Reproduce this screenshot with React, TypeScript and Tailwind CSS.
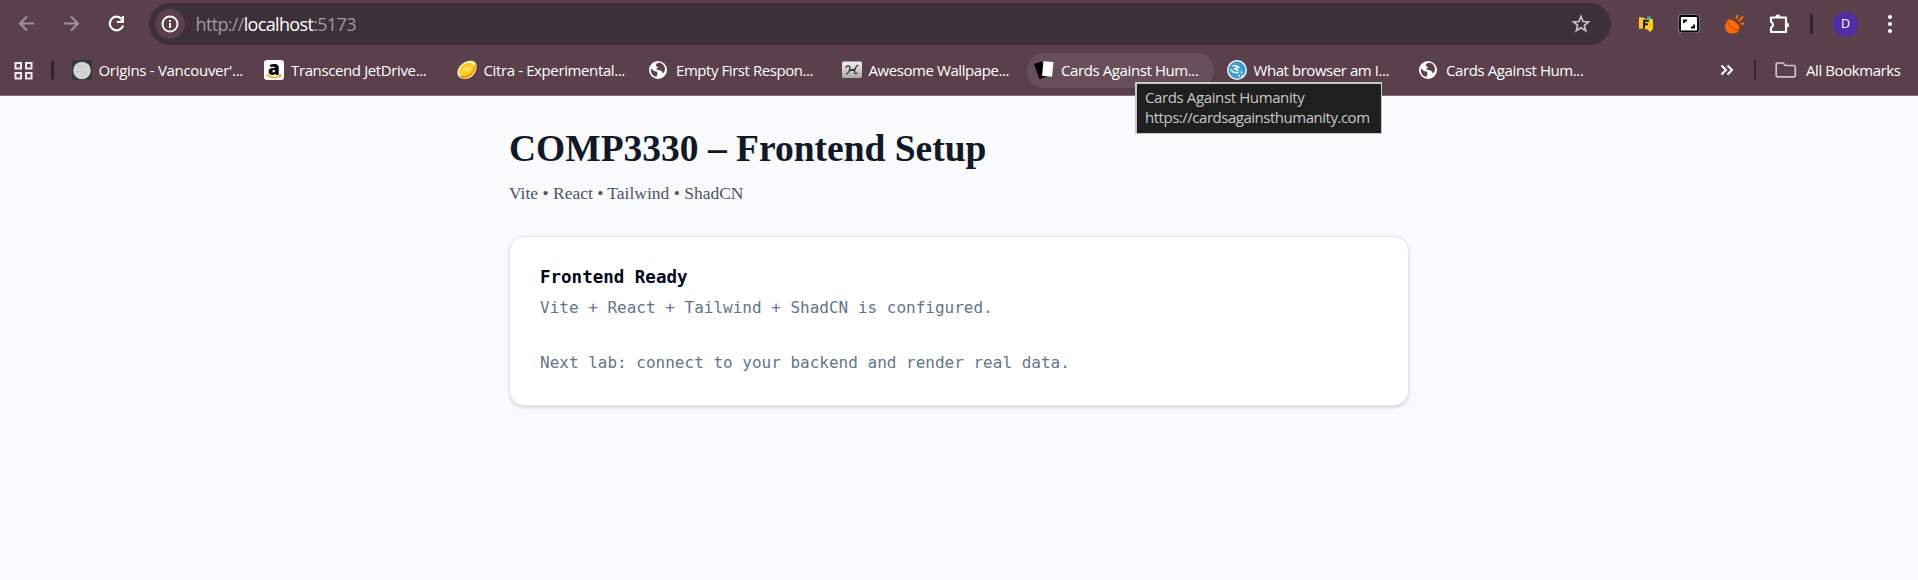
import type { ReactNode } from "react";

function Globe() {
  return (
    <svg width="20" height="20" viewBox="0 0 20 20" className="shrink-0">
      <circle cx="9" cy="10" r="9" fill="#fff" />
      <path d="M2 8.500c1.500 1 2.500 2.500 4 2.800 1.600.3 2.600.6 2.500 2 0 1.500-.8 2-1 3.700C4 16.300 1.300 13 2 8.500ZM9.500 2.800C8 3.500 6.500 4.500 6.800 5.800c.4 1.200 1.700.4 2.200 1.300.4 1-1.500 1-1.500 2.200 0 1.300 2.500 1 4 1.200 1.600.2 1.200 2 2.500 2.400.9.200 1.300-1.400 2-2.900C16.200 5.500 13 2.800 9.500 2.800Z" fill="#5a404b" />
    </svg>
  );
}

const marks: { label: string; track: string; hover?: boolean; icon: ReactNode }[] = [
  {
    label: "Origins - Vancouver'...",
    track: "tracking-[-0.31px]",
    icon: (
      <svg width="20" height="20" viewBox="0 0 20 20" className="shrink-0">
        <rect width="20" height="20" fill="#34383a" />
        <circle cx="10" cy="10.500" r="8.800" fill="#d4d4d4" />
        <path d="M6 7l3-2 2 3 3-1M5 12l4-1 2 3 3-3" stroke="#c4c4c4" fill="none" />
      </svg>
    ),
  },
  {
    label: "Transcend JetDrive...",
    track: "tracking-[-0.38px]",
    icon: (
      <span className="relative flex size-5 shrink-0 justify-center rounded-[3px] bg-white">
        <span className="-mt-[5px] text-[19px] leading-[26px] font-extrabold text-black">a</span>
        <svg width="20" height="20" viewBox="0 0 20 20" className="absolute inset-0">
          <path d="M2.500 14.800q7 4.800 13.500 1" stroke="#f90" strokeWidth="1.500" fill="none" />
          <path d="M14.200 14.800l3.600-.4-.9 3.200z" fill="#f90" />
        </svg>
      </span>
    ),
  },
  {
    label: "Citra - Experimental...",
    track: "tracking-[-0.38px]",
    icon: (
      <svg width="20" height="20" viewBox="0 0 20 20" className="shrink-0">
        <path d="M.5 14C-.5 8.500 5 2 11.500 1c6.500-1 8.700 2 8 7.500C18.500 14.500 13 19.500 7.500 19 4 18.700 1.300 17.500.5 14Z" fill="#fff0b8" />
        <path d="M2 16c7 .5 13.500-4.500 16.800-12.500 1 6-3.600 13.800-10.300 14.700-3 .3-5.500-.7-6.500-2.200Z" fill="#f58f0a" />
        <ellipse cx="9.500" cy="9.500" rx="8.300" ry="5.700" transform="rotate(-38 9.500 9.500)" fill="#ffc917" />
        <path d="M3.500 13.500l12-8.500M8 5.500l4 7.500M4 9.500l11-.5" stroke="#fff0a0" strokeWidth=".8" />
      </svg>
    ),
  },
  { label: "Empty First Respon...", track: "tracking-[-0.44px]", icon: <Globe /> },
  {
    label: "Awesome Wallpape...",
    track: "tracking-[-0.43px]",
    icon: (
      <svg width="20" height="20" viewBox="0 0 20 20" className="shrink-0">
        <defs>
          <linearGradient id="silver" x2="0" y2="1">
            <stop stopColor="#f2f2f2" />
            <stop offset="1" stopColor="#a9a9a9" />
          </linearGradient>
        </defs>
        <rect y="1.500" width="20" height="16.500" rx="1.500" fill="url(#silver)" />
        <path d="M4 8c-.6-2.600 4.600-3 4-.2C7.300 11 6.500 14 4 14M16.500 5.200c-2.500 0-4 4.800-4 7 .1 1.800 1.800 1.800 3 .3M7 10.300l6.500-1.200" stroke="#333" strokeWidth="1.200" fill="none" />
      </svg>
    ),
  },
  {
    label: "Cards Against Hum...",
    track: "tracking-[-0.4px]",
    hover: true,
    icon: (
      <svg width="20" height="20" viewBox="0 0 20 20" className="shrink-0">
        <path d="M0 4l8-2.500 6 14.500-8.500 3z" fill="#000" />
        <path d="M9.500 1.200l10 .9-1.500 14.600-10-1z" fill="#fff" />
      </svg>
    ),
  },
  {
    label: "What browser am I...",
    track: "tracking-[-0.44px]",
    icon: (
      <svg width="20" height="20" viewBox="0 0 20 20" className="shrink-0">
        <circle cx="10" cy="10" r="9.300" fill="#3aa0d2" stroke="#fff" strokeWidth="1.300" />
        <path d="M5.500 5.800h3.500l2.500 1.400-3.500 1.600 3.500 1.700M3.500 9.500l3 2.700 5 .5M14.500 11.500v2M11.500 16h1.500M14.500 16h1.500" stroke="#fff" strokeWidth="1.500" fill="none" />
      </svg>
    ),
  },
  { label: "Cards Against Hum...", track: "tracking-[-0.4px]", icon: <Globe /> },
];

function Toolbar() {
  return (
    <div className="flex h-12 items-center">
      <svg width="149" height="48" viewBox="0 0 149 48" fill="none" strokeWidth="2" className="shrink-0">
        <path d="M34 23.500H20.500M27 16.500l-7 7 7 7M64 23.500h13.500M71 16.500l7 7-7 7" stroke="#a2939a" />
        <path d="M121.700 19a6.800 6.800 0 1 0 1.400 6.500" stroke="#fff" strokeWidth="2.200" />
        <path d="M124 16v7h-7.200v-2h3.200l2-2v-3z" fill="#fff" />
      </svg>
      <div className="flex h-[42px] w-[1462px] shrink-0 items-center rounded-full bg-[#3e3038] pl-1.5">
        <div className="flex size-[30px] items-center justify-center rounded-full bg-[#5a404b]">
          <svg width="18" height="18" viewBox="0 0 18 18" fill="none" stroke="#fff" strokeWidth="1.900">
            <circle cx="9" cy="9" r="7.500" />
            <path d="M9 8v5M9 5v1.900" />
          </svg>
        </div>
        <div className="ml-[10.5px] text-[18px] leading-6 tracking-[-0.66px] text-[#a1979c]">
          http://<span className="text-white">localhost</span>:5173
        </div>
        <svg width="20" height="20" viewBox="0 0 20 20" className="mr-[20px] ml-auto" fill="none" stroke="#c9c3c7" strokeWidth="1.700">
          <path d="M10 2.500l2.100 5 5.400.4-4.100 3.500 1.300 5.300-4.700-2.900-4.700 2.900 1.300-5.300L2.500 7.900l5.400-.4z" />
        </svg>
      </div>
      <div className="flex h-12 items-center">
        <svg width="20" height="20" viewBox="0 0 20 20" className="ml-6">
          <path d="M12 2.500h4v2.500h-4z" fill="#21b8c6" />
          <path d="M1 9.500l4-2.500v5z" fill="#e5173c" />
          <path d="M13 14h4v2l-2 2-2-2z" fill="#ffd21c" />
          <path d="M4 3l5 .8 1.500 1.200H18v10.500h-7L9.500 14l-5.500 1z" fill="#fcca1f" />
          <path d="M9 14V6.800h5M9 10.200h4" stroke="#1b1b1b" strokeWidth="2" fill="none" />
        </svg>
        <svg width="22" height="20" viewBox="0 0 22 20" className="ml-[23px]">
          <rect x=".5" y=".5" width="21" height="18.500" rx="3" fill="#a79da2" />
          <rect x="2" y="2" width="18" height="15.500" rx="1.500" fill="#fff" stroke="#000" strokeWidth="1.800" />
          <path d="M6 9V6.500h3M16 10.500v3h-3" stroke="#000" strokeWidth="1.800" fill="none" />
        </svg>
        <svg width="22" height="22" viewBox="0 0 22 22" className="ml-6">
          <path d="M3 8.200C-.8 13.500 1.500 20 7.500 20.500c3 .2 5.800-.7 7.600-3.500z" fill="#ff6a00" />
          <ellipse cx="9" cy="12.200" rx="7.600" ry="4.200" transform="rotate(38 9 12.200)" fill="#ff6a00" />
          <path d="M3.500 8.500c1 4 6 8.500 11.300 8.300" fill="none" stroke="#9c4a2a" strokeWidth=".9" />
          <path d="M12.200 6l1.300-4M14.700 8.200l4.300-4.700M16.500 11.200l3.500-1" stroke="#ff6a00" strokeWidth="2" />
        </svg>
        <svg width="22" height="22" viewBox="0 0 22 22" className="ml-[22px]" fill="#fff">
          <path d="M3 4.500h15v14.500H3v-4.200a3.300 3.300 0 0 0 0-6z" fill="none" stroke="#fff" strokeWidth="2.200" strokeLinejoin="round" />
          <path d="M7.500 4a2.500 2.500 0 0 1 5 0zM18.500 9.500a2.500 2.500 0 0 1 0 5z" />
        </svg>
        <div className="ml-5 h-5 w-[2.500px] rounded-full bg-[#35262d]" />
        <div className="ml-[20.5px] flex size-[25px] items-center justify-center rounded-full bg-[#512da8] text-[12.5px] text-white">D</div>
        <svg width="6" height="20" viewBox="0 0 6 20" className="ml-[29px]" fill="#fff">
          <circle cx="3" cy="3" r="2" />
          <circle cx="3" cy="10" r="2" />
          <circle cx="3" cy="17" r="2" />
        </svg>
      </div>
    </div>
  );
}

function Bookmarks() {
  return (
    <div className="flex h-11 items-center text-[15px] leading-5 text-white">
      <svg width="20" height="20" viewBox="0 0 20 20" className="ml-[13px] shrink-0" fill="none" stroke="#eee9ec" strokeWidth="2">
        <path d="M2.500 3h5.500v5.500H2.500zM13 3h5.500v5.500h-5.500zM2.500 13h5.500V18.500H2.500zM13 13h5.500v5.500h-5.500z" />
      </svg>
      <div className="ml-[18px] h-5 w-[2.500px] shrink-0 rounded-full bg-[#35262d]" />
      <div className="ml-[11px] flex gap-[5.5px]">
        {marks.map((m, i) => (
          <div key={i} className={`flex h-[35px] w-[187px] items-center gap-[7px] rounded-full pl-[7px] ${m.hover ? "bg-[#674f5a]" : ""}`}>
            {m.icon}
            <span className={`mb-px whitespace-nowrap ${m.track}`}>{m.label}</span>
          </div>
        ))}
      </div>
      <svg width="14" height="12" viewBox="0 0 14 12" className="mr-[20px] ml-auto" fill="none" stroke="#fff" strokeWidth="2">
        <path d="M1.500 1.500L6 6l-4.500 4.500M7.500 1.500L12 6l-4.500 4.500" />
      </svg>
      <div className="h-5 w-[2.500px] rounded-full bg-[#35262d]" />
      <svg width="22" height="18" viewBox="0 0 22 18" className="ml-[19px]" fill="none" stroke="#cdc6ca" strokeWidth="1.700">
        <path d="M2.500 2h5.500l2.500 2.500h8.500q1.300 0 1.300 1.300v8.700q0 1.300-1.300 1.300H2.500q-1.300 0-1.300-1.300V3.300Q1.200 2 2.500 2z" />
      </svg>
      <span className="mb-px ml-[9px] w-[112px] tracking-[-0.42px] whitespace-nowrap">All Bookmarks</span>
    </div>
  );
}

export default function App() {
  return (
    <div className="relative h-[580px] overflow-hidden bg-[#f9fafc] font-['Open_Sans','Noto_Sans',sans-serif]">
      <header className="h-24 border-b border-[#846c78] bg-[#5a404b]">
        <Toolbar />
        <Bookmarks />
      </header>
      <main className="mx-auto w-[900px] pt-[30px]">
        <h1 className="font-['Liberation_Serif',serif] text-[37.5px] leading-[45px] font-bold text-[#111827]">COMP3330 – Frontend Setup</h1>
        <p className="mt-2.5 font-['Liberation_Serif',serif] text-[17.5px] leading-[25px] text-[#4b5563]">Vite • React • Tailwind • ShadCN</p>
        <section className="mt-[30px] h-[170px] rounded-[15px] border border-slate-200 bg-white px-[30px] pt-[30px] font-['DejaVu_Sans_Mono',monospace] text-[#64748b] shadow-[0_1.25px_3.75px_rgba(0,0,0,0.1),0_1.25px_2.5px_-1.25px_rgba(0,0,0,0.1)]">
          <h2 className="text-[17.5px] leading-5 font-bold text-[#020817]">Frontend Ready</h2>
          <p className="mt-[7.5px] text-[16px] leading-[25px]">Vite + React + Tailwind + ShadCN is configured.</p>
          <p className="mt-[30px] text-[16px] leading-[25px]">Next lab: connect to your backend and render real data.</p>
        </section>
      </main>
      <div className="absolute top-[82px] left-[1135px] h-[52px] w-[247px] border-t-2 border-r border-b border-l-2 border-[#c8c8c8] bg-[#1f1f1f] pt-[3px] pl-2 text-[15px] leading-5 whitespace-nowrap text-[#c8c8c8]">
        <div className="tracking-[-0.38px]">Cards Against Humanity</div>
        <div className="tracking-[-0.48px]">https://cardsagainsthumanity.com</div>
      </div>
    </div>
  );
}
